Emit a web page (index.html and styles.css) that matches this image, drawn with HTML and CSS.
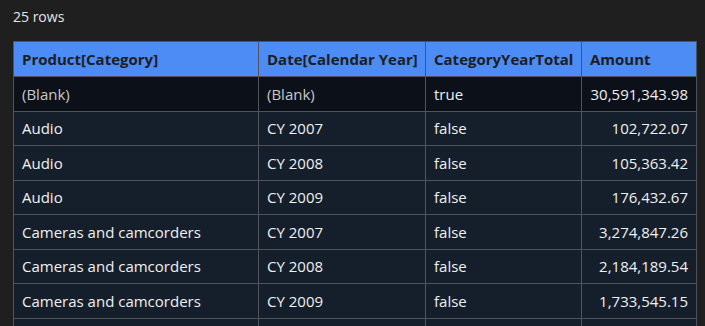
FILE: index.html
```html
<!DOCTYPE html>
<html>
<head>
<meta charset="utf-8">
<link rel="stylesheet" href="styles.css">
</head>
<body>
<div class="count">25 rows</div>
<table class="grid">
<thead>
<tr><th class="c1">Product[Category]</th><th class="c2">Date[Calendar Year]</th><th class="c3">CategoryYearTotal</th><th class="c4">Amount</th></tr>
</thead>
<tbody>
<tr class="total"><td class="blank">(Blank)</td><td class="blank">(Blank)</td><td>true</td><td class="num">30,591,343.98</td></tr>
<tr><td>Audio</td><td>CY 2007</td><td>false</td><td class="num">102,722.07</td></tr>
<tr><td>Audio</td><td>CY 2008</td><td>false</td><td class="num">105,363.42</td></tr>
<tr><td>Audio</td><td>CY 2009</td><td>false</td><td class="num">176,432.67</td></tr>
<tr><td>Cameras and camcorders</td><td>CY 2007</td><td>false</td><td class="num">3,274,847.26</td></tr>
<tr><td>Cameras and camcorders</td><td>CY 2008</td><td>false</td><td class="num">2,184,189.54</td></tr>
<tr><td>Cameras and camcorders</td><td>CY 2009</td><td>false</td><td class="num">1,733,545.15</td></tr>
<tr><td></td><td></td><td></td><td></td></tr>
</tbody>
</table>
</body>
</html>
```
FILE: styles.css
```css
html, body {
  margin: 0;
  padding: 0;
  background: #1f1f1f;
  height: 326px;
  overflow: hidden;
}
body {
  padding: 6px 13px 0 13px;
  font-family: "Open Sans", "Noto Sans", sans-serif;
  font-size: 15px;
  color: #e6e6e6;
}
.count {
  height: 23px;
  line-height: 22px;
  margin-bottom: 12px;
  font-size: 14px;
}
.grid {
  border-collapse: collapse;
  width: 683px;
  table-layout: fixed;
}
.grid th, .grid td {
  border: 1px solid #4f545c;
  padding: 0 8px;
  height: 33.5px;
  text-align: left;
  white-space: nowrap;
  overflow: hidden;
}
.grid th {
  height: 34px;
  background: #4d8bf5;
  color: #1e1e1e;
  font-weight: 700;
}
.c1 { width: 228px; }
.c2 { width: 150px; }
.c3 { width: 139px; }
.c4 { width: 98px; }
.grid td {
  background: #151f2b;
  color: #f0f0f0;
}
.grid .total td {
  background: #0c1119;
}
.grid td.blank {
  color: #c8c8c8;
}
.grid td.num {
  text-align: right;
}
```
